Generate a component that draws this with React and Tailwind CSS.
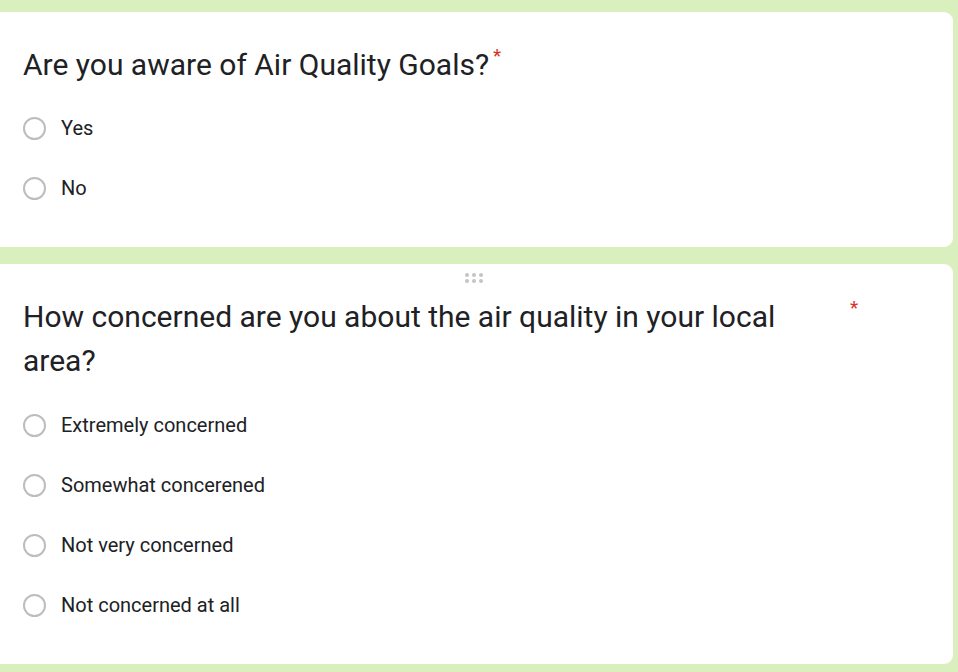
const questions = [
  {
    title: "Are you aware of Air Quality Goals?",
    options: ["Yes", "No"],
  },
  {
    title: "How concerned are you about the air quality in your local area?",
    options: [
      "Extremely concerned",
      "Somewhat concerened",
      "Not very concerned",
      "Not concerned at all",
    ],
  },
];

const DragHandle = () => (
  <div className="h-[31px] pt-[9px] pl-[465px]">
    <div className="grid grid-cols-3 w-fit gap-x-[3px] gap-y-[2px]">
      {Array.from({ length: 6 }).map((_, i) => (
        <span key={i} className="w-[4px] h-[4px] rounded-full bg-[#c4c4c4]" />
      ))}
    </div>
  </div>
);

const Radio = ({ label }) => (
  <div className="flex items-center h-[60px]">
    <span className="w-[23px] h-[23px] rounded-full border-2 border-[#bdbdbd] shrink-0" />
    <span className="ml-[15px] text-[20px] text-[#202124]">{label}</span>
  </div>
);

const App = () => {
  return (
    <div
      className="w-[958px] h-[672px] bg-[#d9efbe] pt-[12px] overflow-hidden"
      style={{ fontFamily: "Roboto, 'Noto Sans', sans-serif" }}>
      {/* first question */}
      <div className="w-[953px] bg-white rounded-r-[9px] pl-[23px] pt-[31px] pb-[29px]">
        <div className="flex items-start">
          <h2 className="text-[30px] leading-[44px] text-[#202124]">
            {questions[0].title}
          </h2>
          <span className="text-[#d93025] text-[19px] leading-none mt-[3px] ml-[4px]">*</span>
        </div>
        <div className="mt-[11px]">
          {questions[0].options.map((o) => (
            <Radio key={o} label={o} />
          ))}
        </div>
      </div>

      {/* second question */}
      <div className="w-[953px] bg-white rounded-r-[9px] pl-[23px] pb-[29px] mt-[17px]">
        <div className="-ml-[23px]">
          <DragHandle />
        </div>
        <div className="flex items-start">
          <h2 className="w-[815px] text-[30px] leading-[44px] text-[#202124]">
            {questions[1].title}
          </h2>
          <span className="text-[#d93025] text-[19px] leading-none mt-[3px] ml-[12px]">*</span>
        </div>
        <div className="mt-[12px]">
          {questions[1].options.map((o) => (
            <Radio key={o} label={o} />
          ))}
        </div>
      </div>
    </div>
  );
};

export default App;
